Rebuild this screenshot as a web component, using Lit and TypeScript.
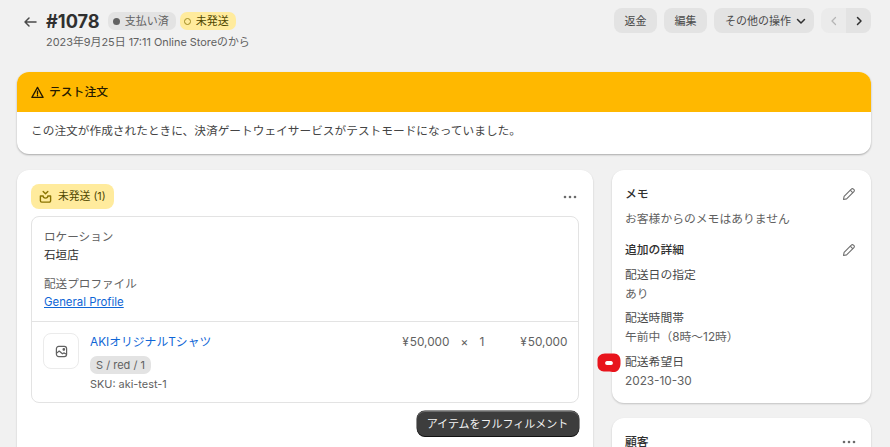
import { LitElement, html, css } from "lit";
import { customElement } from "lit/decorators.js";

const pencil = html`<svg class="ic" viewBox="0 0 16 16" fill="none" stroke="#6f6f6f" stroke-width="1.1"><path d="M2.500 13.500l.6-3.100 7.200-7.300a1.500 1.500 0 0 1 2.200 0l.4.4a1.500 1.500 0 0 1 0 2.200l-7.300 7.200z" stroke-linejoin="round"/><path d="M9.300 4.200l2.600 2.600"/></svg>`;
const dots = html`<svg class="dots" viewBox="0 0 14 4" fill="#6b6b6b"><circle cx="2" cy="2" r="1.300"/><circle cx="7" cy="2" r="1.300"/><circle cx="12" cy="2" r="1.300"/></svg>`;

@customElement("app-root")
export class AppRoot extends LitElement {
  static styles = css`
    :host {
      display: block;
      width: 890px;
      height: 447px;
      overflow: hidden;
      position: relative;
      background: #f1f1f1;
      font-family: Inter, "Noto Sans CJK JP", "Noto Sans", sans-serif;
      font-size: 11.8px;
      line-height: 16px;
      color: #303030;
    }
    .page { padding: 8px 19px 0 17px; display: flex; flex-direction: column; }
    a { color: #0f66d6; text-decoration: none; }
    .header { display: flex; justify-content: space-between; height: 64px; }
    .hleft { display: flex; gap: 8px; padding-left: 5px; }
    .back { width: 16px; height: 16px; margin-top: 6px; }
    .titles { display: flex; flex-direction: column; }
    .titlerow { display: flex; align-items: center; gap: 4px; height: 26px; }
    h1 { margin: 0 4px 0 0; font-size: 18.2px; line-height: 26px; font-weight: 700; color: #303030; }
    .sub { font-size: 10.9px; line-height: 16px; color: #616161; }
    .badge { display: inline-flex; align-items: center; gap: 5px; height: 18px; border-radius: 7px; padding: 0 7px 0 5px; font-size: 11px; background: #e3e3e3; color: #616161; }
    .badge.y { background: #ffeb9d; color: #4f4700; padding-left: 4px; }
    .dot { width: 7px; height: 7px; border-radius: 50%; background: #616161; }
    .ring { width: 5px; height: 5px; border-radius: 50%; border: 1.500px solid #a08a20; }
    .actions { display: flex; gap: 7px; height: 25px; }
    .btn { height: 25px; border-radius: 8px; background: #e3e3e3; color: #4a4a4a; font-size: 11px; display: flex; align-items: center; justify-content: center; }
    .w43 { width: 43px; }
    .more { width: 100px; gap: 4px; justify-content: flex-start; padding-left: 11px; box-sizing: border-box; }
    .pager { display: flex; width: 50px; height: 25px; border-radius: 8px; overflow: hidden; }
    .pager span { display: flex; align-items: center; justify-content: center; }
    .pager .p { width: 25px; background: #ebebeb; }
    .pager .n { width: 25px; background: #e3e3e3; }
    .chev { width: 12px; height: 12px; }
    .banner { border-radius: 12px; overflow: hidden; background: #fff; height: 82px; box-shadow: 0 1px 2px rgba(0,0,0,.3); }
    .bhead { background: #ffb800; height: 40px; display: flex; align-items: center; gap: 5px; padding-left: 14px; font-weight: 500; font-size: 11.800px; color: #251a00; }
    .bhead svg { width: 13px; height: 13px; }
    .bbody { padding: 10px 14px; height: 42px; box-sizing: border-box; font-size: 11.700px; line-height: 18px; color: #444; }
    .cols { display: flex; gap: 19px; margin-top: 16px; align-items: flex-start; }
    .main { width: 575.500px; flex: none; }
    .side { width: 259.500px; flex: none; display: flex; flex-direction: column; gap: 15px; }
    .card { background: #fff; border-radius: 12px; box-shadow: 0 1px 2px rgba(0,0,0,.2); box-sizing: border-box; }
    .main .card { padding: 14px; height: 300px; }
    .ctop { display: flex; justify-content: space-between; align-items: center; height: 25px; }
    .ctop .dots { margin-right: 2px; }
    .fbadge { display: inline-flex; align-items: center; gap: 6px; height: 25px; padding: 0 8px 0 8px; border-radius: 8px; background: #ffeb9d; color: #4f4700; font-size: 10.800px; }
    .fbadge svg { width: 13px; height: 13px; }
    .dots { width: 14px; height: 4px; margin-right: 1px; }
    .inner { margin-top: 7px; border: 1px solid #e3e3e3; border-radius: 8px; height: 187px; box-sizing: border-box; display: flex; flex-direction: column; }
    .loc { padding: 11px 12px 0; height: 105px; box-sizing: border-box; border-bottom: 1px solid #e3e3e3; font-size: 11.600px; }
    .lab { color: #616161; line-height: 18px; }
    .val { color: #303030; line-height: 18px; }
    .loc .gap { margin-top: 11px; }
    .loc a { text-decoration: underline; line-height: 18px; display: block; font-size: 11.400px; }
    .item { display: flex; padding: 11px 10px 0 11px; }
    .thumb { width: 36px; height: 36px; border: 1px solid #ebebeb; border-radius: 8px; box-sizing: border-box; display: flex; align-items: center; justify-content: center; flex: none; }
    .thumb svg { width: 13px; height: 13px; }
    .idesc { margin-left: 11px; flex: 1; display: flex; flex-direction: column; align-items: flex-start; }
    .idesc a { line-height: 18px; }
    .var { height: 18px; margin-top: 5px; padding: 0 6px; border-radius: 7px; background: #e3e3e3; color: #616161; font-size: 11px; line-height: 18px; }
    .sku { font-size: 10.900px; line-height: 16px; margin-top: 2px; color: #616161; }
    .price { display: flex; height: 18px; line-height: 18px; color: #616161; flex: none; }
    .price span:nth-child(1) { width: 58px; text-align: right; }
    .price span:nth-child(2) { width: 30px; text-align: center; }
    .price span:nth-child(3) { width: 12px; }
    .price span:nth-child(4) { width: 76px; text-align: right; }
    .yen { margin-right: 3px; font-size: 11px; }
    .price span .yen { width: auto; }
    .cfoot { display: flex; justify-content: flex-end; margin-top: 8px; }
    .primary { width: 162px; height: 25px; border-radius: 8px; background: #3d3d3d; color: #f2f2f2; font-size: 11px; display: flex; align-items: center; justify-content: center; box-sizing: border-box; box-shadow: inset 0 1px 0 #6a6a6a, 0 1px 0 #111, 0 0 0 .5px #222; }
    .side .card { padding: 14.500px 14px 0 13.500px; }
    .memo { height: 233px; }
    .shead { display: flex; justify-content: space-between; align-items: center; height: 18px; font-weight: 500; color: #303030; }
    .ic { width: 16px; height: 16px; }
    .gray { color: #616161; line-height: 18px; }
    .mt6 { margin-top: 7px; }
    .mt14 { margin-top: 13.500px; }
    .field { margin-top: 7px; }
    .field .l { color: #4a4a4a; line-height: 19px; }
    .field .v { color: #616161; line-height: 19px; }
    .field + .field { margin-top: 5.300px; }
    .cust { height: 60px; }
    .mark { position: absolute; left: 597px; top: 353px; width: 24px; height: 20px; }
  `;

  render() {
    return html`<div class="page">
      <div class="header">
        <div class="hleft">
          <svg class="back" viewBox="0 0 16 16" fill="none" stroke="#4a4a4a" stroke-width="1.500" stroke-linecap="round" stroke-linejoin="round"><path d="M14 8H3M7 4L3 8l4 4"/></svg>
          <div class="titles">
            <div class="titlerow">
              <h1>#1078</h1>
              <span class="badge"><i class="dot"></i>支払い済</span>
              <span class="badge y"><i class="ring"></i>未発送</span>
            </div>
            <div class="sub">2023年9月25日 17:11 Online Storeのから</div>
          </div>
        </div>
        <div class="actions">
          <div class="btn w43">返金</div>
          <div class="btn w43">編集</div>
          <div class="btn more">その他の操作
            <svg class="chev" viewBox="0 0 12 12" fill="none" stroke="#303030" stroke-width="1.500" stroke-linecap="round" stroke-linejoin="round"><path d="M2.500 4.500L6 8l3.500-3.500"/></svg>
          </div>
          <div class="pager">
            <span class="p"><svg class="chev" viewBox="0 0 12 12" fill="none" stroke="#b5b5b5" stroke-width="1.300" stroke-linecap="round" stroke-linejoin="round"><path d="M7.500 2.500L4 6l3.500 3.500"/></svg></span>
            <span class="n"><svg class="chev" viewBox="0 0 12 12" fill="none" stroke="#303030" stroke-width="1.500" stroke-linecap="round" stroke-linejoin="round"><path d="M4.500 2.500L8 6l-3.500 3.500"/></svg></span>
          </div>
        </div>
      </div>

      <div class="banner">
        <div class="bhead">
          <svg viewBox="0 0 14 14" fill="none" stroke="#251a00" stroke-width="1.400" stroke-linejoin="round"><path d="M7 1.500L13 12.300H1z"/><path d="M7 5.500v3.200M7 10v.6" stroke-linecap="round"/></svg>
          テスト注文
        </div>
        <div class="bbody">この注文が作成されたときに、決済ゲートウェイサービスがテストモードになっていました。</div>
      </div>

      <div class="cols">
        <div class="main">
          <div class="card">
            <div class="ctop">
              <span class="fbadge">
                <svg viewBox="0 0 14 14" fill="none" stroke="#8a7400" stroke-width="1.500" stroke-linecap="round" stroke-linejoin="round"><path d="M1.500 6.500h3c0 3 5 3 5 0h3v5a1.500 1.500 0 0 1-1.500 1.500H3a1.500 1.500 0 0 1-1.500-1.500z"/><path d="M4.500 1.500L7 4l2.500-2.500"/></svg>
                未発送 (1)
              </span>
              ${dots}
            </div>
            <div class="inner">
              <div class="loc">
                <div class="lab">ロケーション</div>
                <div class="val">石垣店</div>
                <div class="lab gap">配送プロファイル</div>
                <a>General Profile</a>
              </div>
              <div class="item">
                <div class="thumb">
                  <svg viewBox="0 0 14 14" fill="none" stroke="#616161" stroke-width="1.300" stroke-linejoin="round"><rect x="1.500" y="1.500" width="11" height="11" rx="2.500"/><path d="M1.500 9l3-2.500 3.500 3 1.500-1 3 1.500"/><circle cx="9.500" cy="4.800" r=".8" fill="#616161"/></svg>
                </div>
                <div class="idesc">
                  <a>AKIオリジナルTシャツ</a>
                  <span class="var">S / red / 1</span>
                  <span class="sku">SKU: aki-test-1</span>
                </div>
                <div class="price"><span>¥&#8202;50,000</span><span>×</span><span>1</span><span>¥&#8202;50,000</span></div>
              </div>
            </div>
            <div class="cfoot"><div class="primary">アイテムをフルフィルメント</div></div>
          </div>
        </div>
        <div class="side">
          <div class="card memo">
            <div class="shead">メモ ${pencil}</div>
            <div class="gray mt6">お客様からのメモはありません</div>
            <div class="shead mt14">追加の詳細 ${pencil}</div>
            <div class="field"><div class="l">配送日の指定</div><div class="v">あり</div></div>
            <div class="field"><div class="l">配送時間帯</div><div class="v">午前中（8時～12時）</div></div>
            <div class="field"><div class="l">配送希望日</div><div class="v">2023-10-30</div></div>
          </div>
          <div class="card cust">
            <div class="shead">顧客 ${dots}</div>
          </div>
        </div>
      </div>
    </div>
    <svg class="mark" viewBox="0 0 24 20"><path d="M8 .5h9c4 0 6.500 3 6.500 7v3c0 4-2 8-6 8.500-2 .3-5-1-8-.5-3 .5-8.500-.5-9-6V7C.5 3.500 3.500.5 8 .5z" fill="#e8141c"/><path d="M10 8h4c2.500 0 2.500 4 0 4h-4C7.500 12 7.500 8 10 8z" fill="#fff"/></svg>`;
  }
}
